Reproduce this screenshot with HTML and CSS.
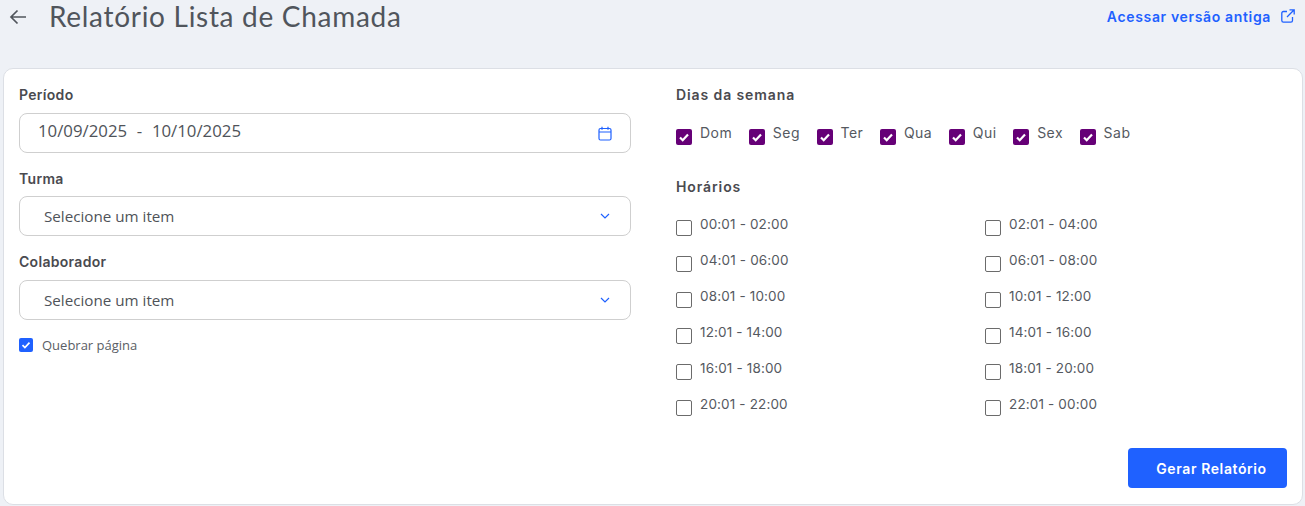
FILE: index.html
```html
<!DOCTYPE html>
<html lang="pt-BR">
	<head>
		<meta charset="UTF-8">
		<meta name="viewport" content="width=device-width, initial-scale=1.0">
		<title>Relatório Lista de Chamada</title>
		<link rel="stylesheet" href="styles.css">
	</head>
	<body>
		<header class="top-bar">
			<div class="title-group">
				<svg class="back-icon" viewBox="0 0 18 16" width="18" height="16" fill="none" stroke="#50555c" stroke-width="1.7">
					<path d="M17 8H2M8.5 1.5L2 8l6.5 6.5"/>
				</svg>
				<h1>Relatório Lista de Chamada</h1>
			</div>
			<a class="old-version" href="#">
				Acessar versão antiga
				<svg viewBox="0 0 14 14" width="14" height="14" fill="none" stroke="#1f61ff" stroke-width="1.3">
					<path d="M11.5 8v3.6a1.6 1.6 0 0 1-1.6 1.6H2.4a1.6 1.6 0 0 1-1.6-1.6V4.1a1.6 1.6 0 0 1 1.6-1.6H6M8.5.8h4.7v4.7M13.2.8L6 8"/>
				</svg>
			</a>
		</header>

		<main class="card">
			<section class="left-col">
				<div class="field">
					<label class="field-label">Período</label>
					<div class="input-box date-box">
						<span class="date-text">10/09/2025&nbsp; - &nbsp;10/10/2025</span>
						<svg viewBox="0 0 14 15" width="14" height="15" fill="none" stroke="#1f61ff" stroke-width="1.2">
							<rect x="1" y="2.5" width="12" height="11.5" rx="1.5"/>
							<path d="M1 6h12M4 .8v3M10 .8v3"/>
						</svg>
					</div>
				</div>
				<div class="field">
					<label class="field-label">Turma</label>
					<div class="input-box select-box turma-box">
						<span>Selecione um item</span>
						<svg viewBox="0 0 10 6" width="10" height="6" fill="none" stroke="#1f61ff" stroke-width="1.2">
							<path d="M1 1l4 4 4-4"/>
						</svg>
					</div>
				</div>
				<div class="field">
					<label class="field-label">Colaborador</label>
					<div class="input-box select-box">
						<span>Selecione um item</span>
						<svg viewBox="0 0 10 6" width="10" height="6" fill="none" stroke="#1f61ff" stroke-width="1.2">
							<path d="M1 1l4 4 4-4"/>
						</svg>
					</div>
				</div>
				<div class="break-page">
					<span class="blue-check">
						<svg viewBox="0 0 14 14" width="14" height="14" fill="none" stroke="#fff" stroke-width="1.7">
							<path d="M3.5 7.2l2.4 2.3 4.6-4.8"/>
						</svg>
					</span>
					<span>Quebrar página</span>
				</div>
			</section>

			<section class="right-col">
				<h2 class="field-label wide-label">Dias da semana</h2>
				<div class="days">
					<div class="opt"><span class="box checked"><svg viewBox="0 0 16 16" width="16" height="16" fill="none" stroke="#fff" stroke-width="2.2"><path d="M4 8.5l2.7 2.7L12 5.4"/></svg></span><span>Dom</span></div>
					<div class="opt"><span class="box checked"><svg viewBox="0 0 16 16" width="16" height="16" fill="none" stroke="#fff" stroke-width="2.2"><path d="M4 8.5l2.7 2.7L12 5.4"/></svg></span><span>Seg</span></div>
					<div class="opt"><span class="box checked"><svg viewBox="0 0 16 16" width="16" height="16" fill="none" stroke="#fff" stroke-width="2.2"><path d="M4 8.5l2.7 2.7L12 5.4"/></svg></span><span>Ter</span></div>
					<div class="opt"><span class="box checked"><svg viewBox="0 0 16 16" width="16" height="16" fill="none" stroke="#fff" stroke-width="2.2"><path d="M4 8.5l2.7 2.7L12 5.4"/></svg></span><span>Qua</span></div>
					<div class="opt"><span class="box checked"><svg viewBox="0 0 16 16" width="16" height="16" fill="none" stroke="#fff" stroke-width="2.2"><path d="M4 8.5l2.7 2.7L12 5.4"/></svg></span><span>Qui</span></div>
					<div class="opt"><span class="box checked"><svg viewBox="0 0 16 16" width="16" height="16" fill="none" stroke="#fff" stroke-width="2.2"><path d="M4 8.5l2.7 2.7L12 5.4"/></svg></span><span>Sex</span></div>
					<div class="opt"><span class="box checked"><svg viewBox="0 0 16 16" width="16" height="16" fill="none" stroke="#fff" stroke-width="2.2"><path d="M4 8.5l2.7 2.7L12 5.4"/></svg></span><span>Sab</span></div>
				</div>

				<h2 class="field-label wide-label hours-label">Horários</h2>
				<div class="hours">
					<div class="opt"><span class="box"></span><span>00:01 - 02:00</span></div>
					<div class="opt"><span class="box"></span><span>02:01 - 04:00</span></div>
					<div class="opt"><span class="box"></span><span>04:01 - 06:00</span></div>
					<div class="opt"><span class="box"></span><span>06:01 - 08:00</span></div>
					<div class="opt"><span class="box"></span><span>08:01 - 10:00</span></div>
					<div class="opt"><span class="box"></span><span>10:01 - 12:00</span></div>
					<div class="opt"><span class="box"></span><span>12:01 - 14:00</span></div>
					<div class="opt"><span class="box"></span><span>14:01 - 16:00</span></div>
					<div class="opt"><span class="box"></span><span>16:01 - 18:00</span></div>
					<div class="opt"><span class="box"></span><span>18:01 - 20:00</span></div>
					<div class="opt"><span class="box"></span><span>20:01 - 22:00</span></div>
					<div class="opt"><span class="box"></span><span>22:01 - 00:00</span></div>
				</div>

				<div class="actions">
					<button class="generate">Gerar Relatório</button>
				</div>
			</section>
		</main>
	</body>
</html>
```

FILE: styles.css
```css
* {
	box-sizing: border-box;
}

body {
	margin: 0;
	height: 506px;
	overflow: hidden;
	background-color: #eef1f6;
	font-family: "Open Sans", sans-serif;
	color: #4b4f56;
}

.top-bar {
	height: 68px;
	display: flex;
	justify-content: space-between;
	align-items: flex-start;
	padding-right: 10px;
}

.title-group {
	display: flex;
	align-items: flex-start;
	gap: 22px;
	padding-left: 9px;
}

.back-icon {
	margin-top: 9px;
}

h1 {
	margin: 0;
	font-family: Lato, sans-serif;
	font-size: 28px;
	font-weight: 400;
	letter-spacing: 0.7px;
	color: #50555c;
	line-height: 32px;
}

.old-version {
	display: flex;
	align-items: center;
	gap: 10px;
	height: 32px;
	font-family: Inter, sans-serif;
	font-size: 14px;
	font-weight: 600;
	letter-spacing: 0.65px;
	color: #1f61ff;
	text-decoration: none;
}

.card {
	margin-left: 3px;
	margin-right: 2px;
	height: 437px;
	display: grid;
	grid-template-columns: 612px 1fr;
	column-gap: 45px;
	padding: 16px 15px;
	background-color: #fff;
	border: 1px solid #dcdfe5;
	border-radius: 10px;
}

.field-label {
	display: block;
	margin: 0;
	font-family: Inter, sans-serif;
	font-size: 14px;
	font-weight: 600;
	line-height: 20px;
	letter-spacing: 0.3px;
	color: #4a4a4f;
}

.wide-label {
	letter-spacing: 0.9px;
}

.field {
	margin-bottom: 16px;
}

.input-box {
	height: 40px;
	margin-top: 8px;
	display: flex;
	align-items: center;
	justify-content: space-between;
	border: 1px solid #cfcfcf;
	border-radius: 8px;
	font-size: 15.2px;
	color: #4f5359;
}

.turma-box {
	margin-top: 7px;
}

.date-box {
	padding: 0 18px 0 18px;
	font-size: 16.8px;
}

.date-text {
	margin-bottom: 6px;
	word-spacing: 0.5px;
}

.select-box {
	padding: 0 20px 0 24px;
}

.break-page {
	display: flex;
	align-items: center;
	gap: 9px;
	margin-top: 4px;
	font-size: 13px;
	color: #5a5e65;
}

.blue-check {
	width: 14px;
	height: 14px;
	display: flex;
	background-color: #1f61ff;
	border-radius: 2px;
}

.right-col {
	display: flex;
	flex-direction: column;
}

.days {
	display: flex;
	gap: 16.5px;
	margin-top: 18px;
}

.days .opt {
	font-size: 14px;
	letter-spacing: 0.5px;
}

.opt {
	display: flex;
	align-items: flex-start;
	gap: 8px;
	font-family: Inter, sans-serif;
	font-size: 13.5px;
	line-height: 20px;
	letter-spacing: 0.15px;
	color: #55595f;
}

.box {
	width: 16px;
	height: 16px;
	margin-top: 6px;
	border: 1px solid #6b6b6b;
	border-radius: 2px;
	background-color: #fff;
}

.box.checked {
	border: none;
	background-color: #660077;
}

.hours-label {
	margin-top: 32px;
}

.hours {
	display: grid;
	grid-template-columns: 309px 1fr;
	grid-auto-rows: 36px;
	margin-top: 17px;
}

.actions {
	display: flex;
	justify-content: flex-end;
	margin-top: auto;
}

.generate {
	width: 159px;
	height: 40px;
	padding-left: 14px;
	border: none;
	border-radius: 4px;
	background-color: #1f61ff;
	color: #fff;
	font-family: Inter, sans-serif;
	font-size: 14px;
	font-weight: 600;
	letter-spacing: 0.6px;
}
```
